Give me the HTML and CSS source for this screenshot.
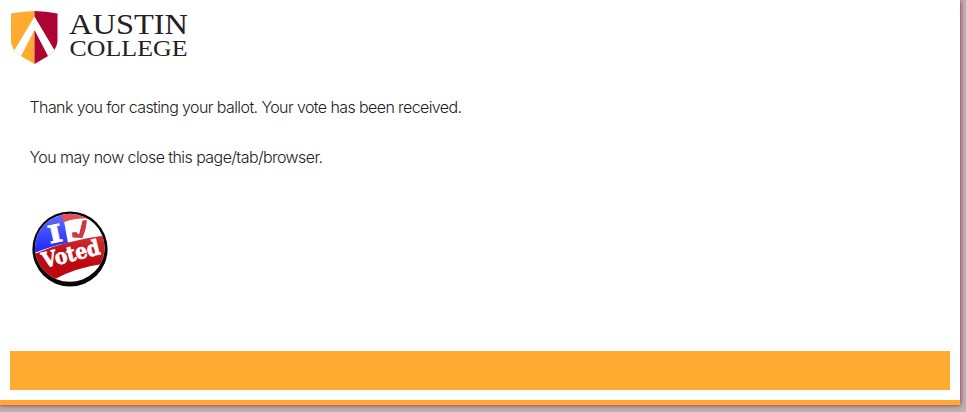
FILE: index.html
```html
<!DOCTYPE html>
<html lang="en">
<head>
<meta charset="utf-8">
<title>Austin College</title>
<link rel="stylesheet" href="styles.css">
</head>
<body>
<div class="page">
  <header class="header">
    <svg class="logo" viewBox="0 0 200 75" role="img" aria-label="Austin College">
      <defs>
        <clipPath id="shield"><path d="M11 13.500Q34.500 8.500 57.500 13.500V40C57.500 46 54.500 51 49 55.500L34.500 64L20 55.500C14 51 11 46 11 40Z"/></clipPath>
      </defs>
      <g clip-path="url(#shield)">
        <path fill="#ffaa30" d="M10 8H34.500V66H10Z"/>
        <path fill="#ae0433" d="M34.500 8H59V66H34.500Z"/>
        <path fill="#fff" d="M34.500 16.500L55 51L48.500 57L34.500 30L20.500 57L14 51Z"/>
      </g>
      <g class="wordmark">
        <text class="word-top" x="69" y="34.300" textLength="119" lengthAdjust="spacingAndGlyphs">AUSTIN</text>
        <text class="word-bottom" x="69.500" y="55.700" textLength="118" lengthAdjust="spacingAndGlyphs">COLLEGE</text>
      </g>
    </svg>
  </header>
  <main class="content">
    <p class="line thanks">Thank you for casting your ballot. Your vote has been received.</p>
    <p class="line close">You may now close this page/tab/browser.</p>
    <svg class="badge" viewBox="0 0 80 80" role="img" aria-label="I Voted">
      <defs>
        <clipPath id="disc"><ellipse cx="39.800" cy="37.800" rx="34.800" ry="34"/></clipPath>
        <linearGradient id="blue" x1="0" y1="0" x2="0" y2="1"><stop offset="0" stop-color="#6975ff"/><stop offset="1" stop-color="#1822ff"/></linearGradient>
        <linearGradient id="red" x1="1" y1="0" x2="0.700" y2="1"><stop offset="0" stop-color="#d5333a"/><stop offset="0.600" stop-color="#bd0812"/></linearGradient>
      </defs>
      <ellipse cx="40" cy="39" rx="37.600" ry="37.500" fill="#080808"/>
      <g clip-path="url(#disc)">
        <path fill="#fff" d="M0 0H80V80H0Z"/>
        <path fill="url(#blue)" d="M0 0H32L38 33Q20 36 0 45Z"/>
        <path fill="#de5257" d="M31 0H80V11Q53 5 33 12.500Z"/>
        <path fill="url(#red)" d="M0 46Q19 37 38 32.500Q58 27 80 25V53Q48 56 23 70L0 76Z"/>
        <path class="check" d="M42 22.500L46 22L49 24.500L52.500 10.500L57 10Q56.500 19 52.500 28L42.500 27.500Z"/>
      </g>
      <text class="badge-i" transform="translate(20 33.500) rotate(-12)" textLength="14" lengthAdjust="spacingAndGlyphs">I</text>
      <text class="badge-voted" transform="translate(14 58) rotate(-14)" textLength="59" lengthAdjust="spacingAndGlyphs">Voted</text>
    </svg>
  </main>
  <footer class="footer"></footer>
</div>
</body>
</html>
```

FILE: styles.css
```css
* { box-sizing: border-box; }
body {
  margin: 0;
  height: 412px;
  overflow: hidden;
  background: #b8b4b5;
}
.page {
  width: 960px;
  height: 405px;
  background: #fff;
  border-bottom: 5px solid #ffaa30;
  box-shadow: 0 0 5px #ae0433;
}
.header { height: 75px; }
.logo { display: block; width: 200px; height: 75px; }
.wordmark {
  font-family: "Liberation Serif", serif;
  fill: #242122;
}
.word-top { font-size: 30px; }
.word-bottom { font-size: 24px; }
.content { height: 276px; padding: 22px 30px 0 29.500px; }
.line {
  margin: 0 0 30px;
  font: 300 16px/20px Inter, "Liberation Sans", sans-serif;
  color: #222;
  white-space: nowrap;
}
.thanks { letter-spacing: -0.600px; }
.close { letter-spacing: -0.570px; }
.badge { display: block; width: 80px; height: 80px; margin-top: 43px; }
.check { fill: #ce3840; }
.badge-i, .badge-voted {
  font-family: "DejaVu Serif", serif;
  font-weight: 700;
  fill: #fff;
  stroke: #fff;
  stroke-width: 0.800;
}
.badge-i { font-size: 24px; }
.badge-voted { font-size: 21px; }
.footer { height: 39px; margin: 0 10px; background: #ffaa30; }
```
